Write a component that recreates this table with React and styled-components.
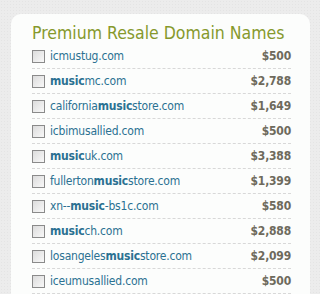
import React from 'react';
import styled, { createGlobalStyle } from 'styled-components';

const Global = createGlobalStyle`
  html, body {
    margin: 0;
    padding: 0;
  }
  body {
    background-color: #ececec;
    background-image: radial-gradient(#e4e4e4 0.6px, transparent 0.8px);
    background-size: 3px 3px;
    font-family: "DejaVu Sans Condensed", "DejaVu Sans", sans-serif;
    overflow: hidden;
  }
`

const Page = styled.div`
  width: 320px;
  height: 294px;
  padding: 14px 10px 0 11px;
  box-sizing: border-box;
`

const Card = styled.section`
  background: #fcfdfc;
  border-radius: 10px 10px 0 0;
  padding: 9px 19px 0 21px;
  height: 290px;
`

const Title = styled.h2`
  margin: 0;
  font-size: 17.5px;
  font-weight: normal;
  color: #86992c;
  line-height: 21px;
  white-space: nowrap;
`

const List = styled.ul`
  list-style: none;
  margin: 0;
  padding: 0;
`

const Row = styled.li`
  display: flex;
  align-items: center;
  height: 24px;
  border-bottom: 1px dashed #d8d8d8;
  font-size: 12px;
  letter-spacing: -0.2px;
`

const Box = styled.span`
  width: 11px;
  height: 11px;
  border: 1px solid #8a8a8a;
  background: linear-gradient(135deg, #dcdcdc, #f8f8f8);
  margin-right: 5px;
  flex: none;
`

const Domain = styled.a`
  color: #2b7192;
  text-decoration: none;
  flex: 1;
  white-space: nowrap;
  b { font-weight: bold; }
`

const Price = styled.span`
  color: #6e6a5c;
  font-weight: bold;
`

const domains = [
  ['icmustug.com', '$500'],
  ['musicmc.com', '$2,788'],
  ['californiamusicstore.com', '$1,649'],
  ['icbimusallied.com', '$500'],
  ['musicuk.com', '$3,388'],
  ['fullertonmusicstore.com', '$1,399'],
  ['xn--music-bs1c.com', '$580'],
  ['musicch.com', '$2,888'],
  ['losangelesmusicstore.com', '$2,099'],
  ['iceumusallied.com', '$500'],
]

const renderName = name => {
  const i = name.indexOf('music')
  if (i < 0) return name
  return (
    <>
      {name.slice(0, i)}<b>music</b>{name.slice(i + 5)}
    </>
  )
}

export default function App() {
  return (
    <>
      <Global />
      <Page>
        <Card>
          <Title>Premium Resale Domain Names</Title>
          <List>
            {domains.map(([name, price]) => (
              <Row key={name}>
                <Box />
                <Domain href="#">{renderName(name)}</Domain>
                <Price>{price}</Price>
              </Row>
            ))}
          </List>
        </Card>
      </Page>
    </>
  )
}
